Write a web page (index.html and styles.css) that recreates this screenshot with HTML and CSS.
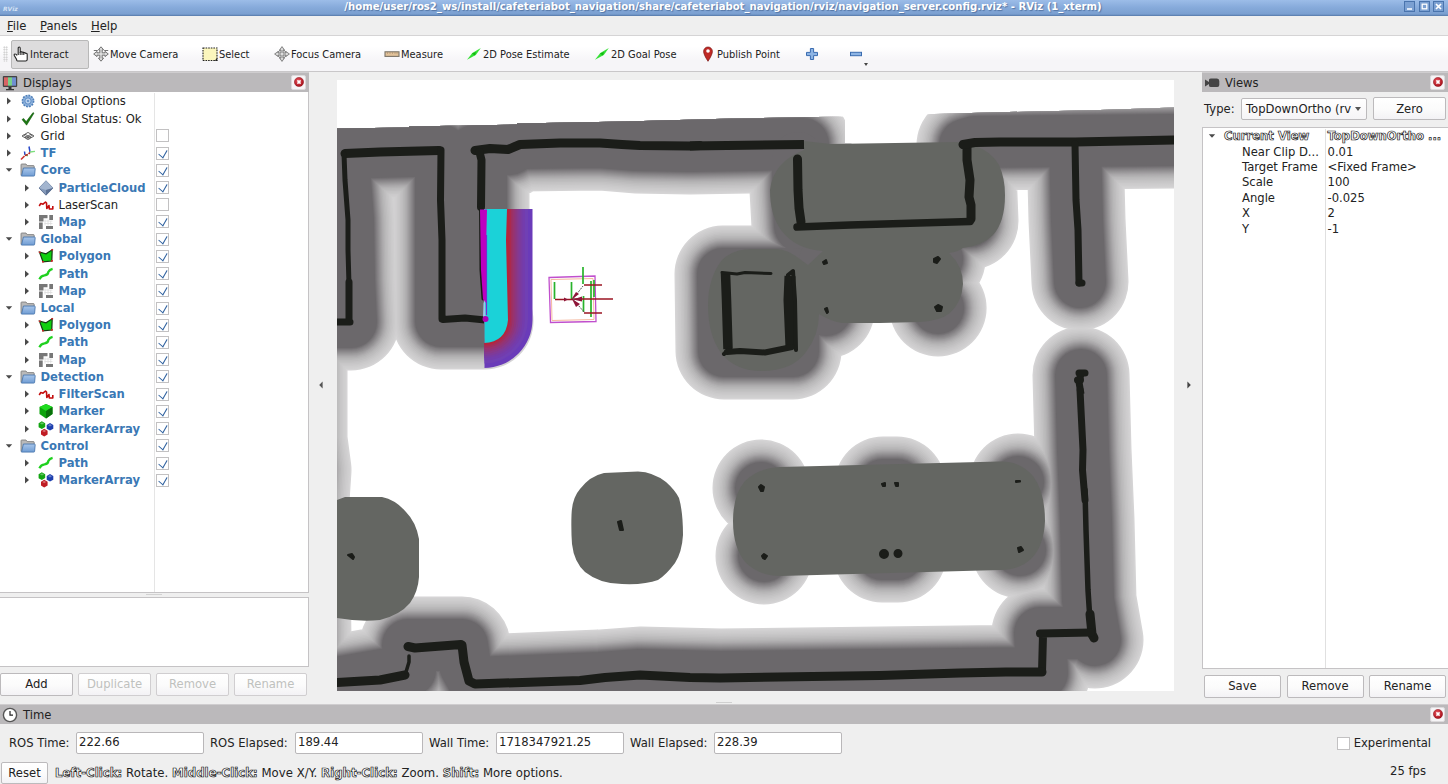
FILE: index.html
```html
<!DOCTYPE html>
<html lang="en">
<head>
<meta charset="utf-8">
<title>RViz</title>
<link rel="stylesheet" href="styles.css">
</head>
<body>
<svg class="defs" aria-hidden="true">
  <defs>
    <linearGradient id="gBlue" x1="0" y1="0" x2="0" y2="1"><stop offset="0" stop-color="#a9c6ea"/><stop offset="1" stop-color="#6f9cd3"/></linearGradient>
    <radialGradient id="gRed" cx=".4" cy=".35" r=".7"><stop offset="0" stop-color="#e8505a"/><stop offset="1" stop-color="#a30d18"/></radialGradient>
    <symbol id="i-right" viewBox="0 0 8 10"><path d="M2 1.6 6 5 2 8.4Z" fill="#4a4a4a"/></symbol>
    <symbol id="i-down" viewBox="0 0 8 10"><path d="M.8 3.2h6.4L4 6.8Z" fill="#4a4a4a"/></symbol>
    <symbol id="i-close" viewBox="0 0 10 10"><circle cx="5" cy="5" r="4.6" fill="url(#gRed)" stroke="#8d0f18" stroke-width=".5"/><path d="M3.4 3.4l3.2 3.2M6.6 3.4 3.4 6.6" stroke="#fff" stroke-width="1.5"/></symbol>
    <symbol id="i-gear" viewBox="0 0 16 16"><circle cx="8" cy="8" r="5.6" fill="#8fb3de" stroke="#4f7fb8" stroke-width="1.6" stroke-dasharray="1.9 1"/><circle cx="8" cy="8" r="3.2" fill="#b7cfec" stroke="#5c8bc4"/><circle cx="8" cy="8" r="1.1" fill="#5c8bc4"/></symbol>
    <symbol id="i-ok" viewBox="0 0 16 16"><path d="M2 8.6 3.6 7.4 6.2 10.6 13 1.6 14 2.2 6.6 14.2Z" fill="#1c7a12" stroke="#0d4d08" stroke-width=".5"/></symbol>
    <symbol id="i-grid" viewBox="0 0 16 16"><path d="M2 8 8 4.4 14 8 8 11.6ZM5 6.2l6 3.6M11 6.2 5 9.8M3.5 7.1l6 3.6M12.500 7.1l-6 3.600" fill="none" stroke="#555" stroke-width=".9"/></symbol>
    <symbol id="i-tf" viewBox="0 0 16 16"><path d="M1 14.500 4.500 11" stroke="#c33" stroke-width="1.6"/><path d="M5 10 4.500 6.500M10 7 9 1.500" stroke="#2848c8" stroke-width="1.500"/><path d="M5 10l3 .8M10 7l5-.6" stroke="#7ddf7d" stroke-width="1.300"/><path d="M5 10.500 8 9.500 10 7.500" stroke="#b02020" stroke-width="1.600" fill="none" stroke-dasharray="3 1"/></symbol>
    <symbol id="i-folder" viewBox="0 0 16 16"><path d="M1 13.500V2.700Q1 2 1.800 2H6l1.200 1.600h6.300q.7 0 .7.700V6" fill="#b9b9b9" stroke="#777" stroke-width=".8"/><path d="M3.400 6h11q.8 0 .8.800l-.6 6.500q0 .8-.8.800H1.500z" fill="url(#gBlue)" stroke="#3f6ea8" stroke-width=".8"/></symbol>
    <symbol id="i-cloud" viewBox="0 0 16 16"><path d="M8 .8 15 8 8 15.200 1 8Z" fill="#8398b8" stroke="#4f6385" stroke-width=".8"/><path d="M8 .8 15 8 8 10 1 8Z" fill="#a3b5cf"/><path d="M8 10 15 8 8 15.200Z" fill="#5c7194"/></symbol>
    <symbol id="i-scan" viewBox="0 0 16 16"><path d="M1.200 9 2.800 6.500 5 7.200 7.500 5 8.500 6 8.800 11.500 11 8.500 11.300 12 14.800 12V9" fill="none" stroke="#c40d0d" stroke-width="1.600" stroke-linejoin="round"/></symbol>
    <symbol id="i-map" viewBox="0 0 16 16"><path d="M1 1h8.500v3.200H5.500v3.300H1zM11.300 1H15v5h-3.700zM1 8.500h3.700V15H1zM8 12h7v3H8z" fill="#777"/><path d="M6.500 7h8M6.500 9.500h8M7 5.500v6M10 5.500v6M12.700 7v4.500" stroke="#ddd" stroke-width=".8"/></symbol>
    <symbol id="i-poly" viewBox="0 0 16 16"><path d="M1.500 4.200 8 5.800 14.200 1.800 13.800 13 5 13.800Z" fill="#10d010" stroke="#143c14" stroke-width="1.200"/><path d="M.8 3.500h1.800v1.600H.8zM13.300 1h1.800v1.600h-1.800zM13 12h1.800v1.800H13zM4 13h1.800v1.600H4z" fill="#c22"/></symbol>
    <symbol id="i-path" viewBox="0 0 16 16"><path d="M1.400 13.200Q3 9.800 6.500 9.400 10.500 8.500 10.300 6 11.500 3.500 14.600 2.800" fill="none" stroke="#1fd01f" stroke-width="2.300"/></symbol>
    <symbol id="i-marker" viewBox="0 0 16 16"><path d="M8 1 14.500 4v7L8 15.400 1.500 11V4Z" fill="#0da30d"/><path d="M8 1l6.500 3L8 8 1.500 4Z" fill="#1fdc1f"/><path d="M8 8l6.500-4v7L8 15.400Z" fill="#07700a"/></symbol>
    <symbol id="i-marr" viewBox="0 0 16 16"><path d="M3.800.3 7.200 2.200v3.900L3.800 8 .6 6.200V2.200Z" fill="#12a512"/><path d="M12 1.900 15.300 4v3.700L12 9.600 8.700 7.700V4Z" fill="#1d3fae"/><path d="M6.200 7.800 9.600 9.800v3.700L6.200 15.500 3 13.500V9.800Z" fill="#c01c24"/><path d="M4 1.200l2 1.200-2 1.200-2-1.200zM12 3l2 1.200-2 1.200-2-1.200zM6.200 8.800l2 1.200-2 1.200-2-1.200z" fill="#fff" opacity=".35"/></symbol>
    <symbol id="i-move" viewBox="0 0 16 16"><path d="M8 .8 10.600 3.800H9.200v3H12V5.400L15.300 8 12 10.600V9.200H9.200v3h1.400L8 15.200 5.400 12.200h1.400v-3H4v1.400L.7 8 4 5.400v1.400h2.800v-3H5.400ZM.8 4.500h4M11.200 4.500h4" fill="#ddd" stroke="#666" stroke-width=".9"/></symbol>
    <symbol id="i-focus" viewBox="0 0 16 16"><g fill="#ddd" stroke="#777" stroke-width=".9"><circle cx="8" cy="8" r="4.300"/><path d="M8 .6 10.400 4H9v3h3V5.600L15.400 8 12 10.400V9H9v3h1.400L8 15.400 5.600 12H7V9H4v1.400L.6 8 4 5.600V7h3V4H5.600Z"/></g></symbol>
    <symbol id="i-pose" viewBox="0 0 16 16"><path d="M1 13.800 6.300 6.900 14.800 2 9.800 9.100Z" fill="#35e035"/><path d="M6 7.500 10 6 8.800 9.500Z" fill="#12b812"/></symbol>
  </defs>
</svg>

<header class="titlebar">
  <span class="tb-logo">RViz</span>
  <span class="tb-text">/home/user/ros2_ws/install/cafeteriabot_navigation/share/cafeteriabot_navigation/rviz/navigation_server.config.rviz* - RViz (1_xterm)</span>
  <span class="tb-btns">
    <svg viewBox="0 0 11 11"><rect x=".5" y=".5" width="10" height="10" fill="#7ba0d2" stroke="#4a74ad"/><path d="M3 8h5" stroke="#fff" stroke-width="1.500"/></svg>
    <svg viewBox="0 0 11 11"><rect x=".5" y=".5" width="10" height="10" fill="#7ba0d2" stroke="#4a74ad"/><rect x="3.200" y="3.200" width="4.600" height="4.600" fill="none" stroke="#fff" stroke-width="1.300"/></svg>
    <svg viewBox="0 0 11 11"><rect x=".5" y=".5" width="10" height="10" fill="#7ba0d2" stroke="#4a74ad"/><path d="M3 3l5 5M8 3 3 8" stroke="#fff" stroke-width="1.700"/></svg>
  </span>
</header>

<nav class="menubar"><span class="m-file"><u>F</u>ile</span><span class="m-panels"><u>P</u>anels</span><span><u>H</u>elp</span></nav>

<div class="toolbar">
  <div class="grip"></div>
  <div class="tool active"><svg viewBox="0 0 16 16"><path d="M5.200 9V2.200q0-1.200 1-1.200t1 1.200V6q1.300-.8 1.800.3 1.300-.6 1.800.4 1.300-.4 1.700.6 1.700-.3 1.700 1.100v5q0 1.600-1.600 1.600H4.500Q3.600 15 3.600 13.500L1.300 9.500Q.8 7.800 2.300 8q1 0 1.700 1.500" fill="#fff" stroke="#222" stroke-width="1.100"/><path d="M7.200 6v3M9 6.500V9M10.800 7v2" stroke="#222" fill="none"/></svg>Interact</div>
  <div class="tool"><svg><use href="#i-move"/></svg>Move Camera</div>
  <div class="tool"><svg viewBox="0 0 16 16"><rect x="1" y="2" width="14" height="12.500" fill="#fbf6bd" stroke="#222" stroke-width="1.100" stroke-dasharray="1.600 1"/><path d="M12.500 14.800h2.800V12Z" fill="#222"/></svg>Select</div>
  <div class="tool"><svg><use href="#i-focus"/></svg>Focus Camera</div>
  <div class="tool"><svg viewBox="0 0 16 16"><rect x="1" y="5.800" width="14" height="4.600" fill="#e2c29a" stroke="#7b7468" stroke-width="1.100"/><path d="M3.500 6v2M6 6v2M8.500 6v2M11 6v2M13 6v2" stroke="#a98d6a" stroke-width=".6"/></svg>Measure</div>
  <div class="tool"><svg><use href="#i-pose"/></svg>2D Pose Estimate</div>
  <div class="tool"><svg><use href="#i-pose"/></svg>2D Goal Pose</div>
  <div class="tool"><svg viewBox="0 0 16 16"><path d="M8 15.300Q3.600 8.500 3.600 5.400A4.400 4.400 0 0 1 12.400 5.400Q12.400 8.500 8 15.300Z" fill="#bf2a26" stroke="#7c1512" stroke-width=".7"/><circle cx="8" cy="5" r="1.800" fill="#fff"/></svg>Publish Point</div>
  <div class="tool"><svg viewBox="0 0 16 16"><path d="M6.400 2.500h3.200v3.900h3.900v3.200H9.600v3.900H6.400V9.600H2.500V6.400h3.900Z" fill="#8db4e4" stroke="#3a6cb0"/></svg></div>
  <div class="tool"><svg viewBox="0 0 16 16"><rect x="2.500" y="6.300" width="11" height="3.400" fill="#8db4e4" stroke="#3a6cb0"/></svg><i class="drop"></i></div>
</div>

<main class="middle">
  <section class="dock displays">
    <div class="dock-head"><svg class="hicon" viewBox="0 0 16 16"><rect x=".8" y="1" width="14.400" height="11" rx="1" fill="#444"/><path d="M2 2.300h4v8.400H2z" fill="#d86464"/><path d="M6 2.300h4v8.400H6z" fill="#7ad08a"/><path d="M10 2.300h4v8.400h-4z" fill="#6f8fd0"/><path d="M6.500 12h3v2h2.500v1.300H4V14h2.500z" fill="#333"/></svg>Displays<span class="closebtn"><svg><use href="#i-close"/></svg></span></div>
    <div class="tree">
      <div class="row"><div class="name"><svg class="ar"><use href="#i-right"/></svg><svg class="ic"><use href="#i-gear"/></svg>Global Options</div></div>
      <div class="row"><div class="name"><svg class="ar"><use href="#i-right"/></svg><svg class="ic"><use href="#i-ok"/></svg>Global Status: Ok</div></div>
      <div class="row"><div class="name"><svg class="ar"><use href="#i-right"/></svg><svg class="ic"><use href="#i-grid"/></svg>Grid</div><i class="cb"></i></div>
      <div class="row on"><div class="name"><svg class="ar"><use href="#i-right"/></svg><svg class="ic"><use href="#i-tf"/></svg>TF</div><i class="cb"></i></div>
      <div class="row on"><div class="name"><svg class="ar"><use href="#i-down"/></svg><svg class="ic"><use href="#i-folder"/></svg>Core</div><i class="cb"></i></div>
      <div class="row on sub"><div class="name"><svg class="ar"><use href="#i-right"/></svg><svg class="ic"><use href="#i-cloud"/></svg>ParticleCloud</div><i class="cb"></i></div>
      <div class="row sub"><div class="name"><svg class="ar"><use href="#i-right"/></svg><svg class="ic"><use href="#i-scan"/></svg>LaserScan</div><i class="cb"></i></div>
      <div class="row on sub"><div class="name"><svg class="ar"><use href="#i-right"/></svg><svg class="ic"><use href="#i-map"/></svg>Map</div><i class="cb"></i></div>
      <div class="row on"><div class="name"><svg class="ar"><use href="#i-down"/></svg><svg class="ic"><use href="#i-folder"/></svg>Global</div><i class="cb"></i></div>
      <div class="row on sub"><div class="name"><svg class="ar"><use href="#i-right"/></svg><svg class="ic"><use href="#i-poly"/></svg>Polygon</div><i class="cb"></i></div>
      <div class="row on sub"><div class="name"><svg class="ar"><use href="#i-right"/></svg><svg class="ic"><use href="#i-path"/></svg>Path</div><i class="cb"></i></div>
      <div class="row on sub"><div class="name"><svg class="ar"><use href="#i-right"/></svg><svg class="ic"><use href="#i-map"/></svg>Map</div><i class="cb"></i></div>
      <div class="row on"><div class="name"><svg class="ar"><use href="#i-down"/></svg><svg class="ic"><use href="#i-folder"/></svg>Local</div><i class="cb"></i></div>
      <div class="row on sub"><div class="name"><svg class="ar"><use href="#i-right"/></svg><svg class="ic"><use href="#i-poly"/></svg>Polygon</div><i class="cb"></i></div>
      <div class="row on sub"><div class="name"><svg class="ar"><use href="#i-right"/></svg><svg class="ic"><use href="#i-path"/></svg>Path</div><i class="cb"></i></div>
      <div class="row on sub"><div class="name"><svg class="ar"><use href="#i-right"/></svg><svg class="ic"><use href="#i-map"/></svg>Map</div><i class="cb"></i></div>
      <div class="row on"><div class="name"><svg class="ar"><use href="#i-down"/></svg><svg class="ic"><use href="#i-folder"/></svg>Detection</div><i class="cb"></i></div>
      <div class="row on sub"><div class="name"><svg class="ar"><use href="#i-right"/></svg><svg class="ic"><use href="#i-scan"/></svg>FilterScan</div><i class="cb"></i></div>
      <div class="row on sub"><div class="name"><svg class="ar"><use href="#i-right"/></svg><svg class="ic"><use href="#i-marker"/></svg>Marker</div><i class="cb"></i></div>
      <div class="row on sub"><div class="name"><svg class="ar"><use href="#i-right"/></svg><svg class="ic"><use href="#i-marr"/></svg>MarkerArray</div><i class="cb"></i></div>
      <div class="row on"><div class="name"><svg class="ar"><use href="#i-down"/></svg><svg class="ic"><use href="#i-folder"/></svg>Control</div><i class="cb"></i></div>
      <div class="row on sub"><div class="name"><svg class="ar"><use href="#i-right"/></svg><svg class="ic"><use href="#i-path"/></svg>Path</div><i class="cb"></i></div>
      <div class="row on sub"><div class="name"><svg class="ar"><use href="#i-right"/></svg><svg class="ic"><use href="#i-marr"/></svg>MarkerArray</div><i class="cb"></i></div>
      <div class="rest"></div>
    </div>
    <div class="hsplit"></div>
    <div class="desc"></div>
    <div class="btnrow"><button>Add</button><button disabled>Duplicate</button><button disabled>Remove</button><button disabled>Rename</button></div>
  </section>

  <div class="vsplit"><svg viewBox="0 0 8 10"><path d="M5.600 1.500v7L2.200 5Z" fill="#555"/></svg></div>

  <svg class="view" viewBox="337 80 837 611">
    <defs>
      <clipPath id="mapClip"><path d="M337 128.500 409 127.500V126.500L517 124.500V123.500L625 121.500 733 118.500 845 116.500V143H915V114.500L990 112.500 1100 110 1174 107.500V691H337Z"/></clipPath>
      <clipPath id="localClip"><path d="M484 209H533V368H484.500Z"/></clipPath>
      <g id="walls" fill="none" stroke-linecap="round" stroke-linejoin="round">
        <path d="M330 322H351L349 280 348 220 343 153 441 150V321H485L481 300V151H474L510 149 520 143 600 142 636 145 690 146 803 144"/>
        <path d="M965 145 975 142 1174 140M1075 142 1077 220 1080 282M798 158V190L800 226 970 221 967 146"/>
        <path d="M723 274H793V351H724Z"/>
        <path d="M825 261h.1M937 259h.1M826 310h.1M938 308h.1"/>
        <path d="M761 488h.1M883 485H897M1018 482h.1M764 556h.1M882 554H898M1020 550h.1"/>
        <path d="M1081 375 1083 450 1086 520 1088 600 1095 640M1090 633H1040L1042 673 960 674 720 677 640 675 600 678 475 683 465 665 462 645H408L410 670 337 683"/>
        <path d="M299 322 299 440 303 470 301 500 303 640"/>
      </g>
      <g id="localWall" fill="none" stroke-linecap="round" stroke-linejoin="round"><path d="M484 190V319.500"/></g>
    </defs>
    <rect x="337" y="80" width="837" height="611" fill="#fff"/>
    <g clip-path="url(#mapClip)">
      <use href="#walls" stroke="#d5d4d5" stroke-width="97"/>
      <use href="#walls" stroke="#d1d0d1" stroke-width="94"/>
      <use href="#walls" stroke="#cecdce" stroke-width="91"/>
      <use href="#walls" stroke="#cbcacb" stroke-width="88"/>
      <use href="#walls" stroke="#c7c6c7" stroke-width="85"/>
      <use href="#walls" stroke="#c3c2c3" stroke-width="82"/>
      <use href="#walls" stroke="#bebdbe" stroke-width="79"/>
      <use href="#walls" stroke="#b9b8b9" stroke-width="76"/>
      <use href="#walls" stroke="#b3b2b3" stroke-width="73"/>
      <use href="#walls" stroke="#adabad" stroke-width="70.500"/>
      <use href="#walls" stroke="#a6a4a6" stroke-width="68"/>
      <use href="#walls" stroke="#9f9d9f" stroke-width="66"/>
      <use href="#walls" stroke="#989698" stroke-width="64"/>
      <use href="#walls" stroke="#918f91" stroke-width="62"/>
      <use href="#walls" stroke="#8a878a" stroke-width="60"/>
      <use href="#walls" stroke="#838083" stroke-width="58"/>
      <use href="#walls" stroke="#7b787b" stroke-width="56"/>
      <use href="#walls" stroke="#737073" stroke-width="54"/>
      <use href="#walls" stroke="#6b686b" stroke-width="52"/>
    </g>
    <g fill="#646662">
      <path d="M804 141 830 144 960 142 975 146Q991 151 999 165 1005 178 1005 195 1005 222 993 235 982 246 963 248 958 252 949 253 963 266 963 284 962 302 950 313 940 321 920 322L880 323H842Q830 321 819 314 819 335 806 352 792 371 762 371 735 371 721 353 708 335 708 305 708 278 722 260 733 249 752 249H777Q788 250 797 257L808 265 823 251Q795 249 781 230 770 215 770 190 773 162 804 150Z"/>
      <path d="M780 467 1000 461.500Q1020 461 1033 476 1045 492 1045 521 1044 545 1032 558 1020 570 1000 570L780 576Q760 576 746 563 733 548 733 521 733 495 745 481 758 468 780 467Z"/>
      <path d="M604 473 638 471.500Q653 472 666 482 675 490 679 498 683 512 683 535 682 552 675 563 666 575 658 580 645 585 622 584 600 584 585 572 574 562 572 544 571 530 571.500 515 572 498 580 489 590 476 604 473Z"/>
      <path d="M337 500 345 497H382Q396 500 406 512 416 522 419 539V577Q418 592 410 603 400 615 380 620 360 622 337 618Z"/>
    </g>
    <g fill="none" stroke="#1b1d19" stroke-linecap="round" stroke-linejoin="round">
      <path stroke-width="9" d="M345 153.500 380 152 439 150.500M475 150.500 490 148.500 508 149.500 514 147 520 144.500 560 143 600 143 622 144.500 640 145.500 690 146 700 145.500"/>
      <path stroke-width="9" stroke-linecap="butt" d="M690 146 804 144.500"/>
      <path stroke-width="5" d="M344 154 345 180 348 220 348 250 349 285"/>
      <path stroke-width="7" d="M349 282V320M337 322H350M441 150 440.500 200 442 240 442 319M443 319.500 465 318 485 320"/>
      <path stroke-width="8" d="M479.500 152 481.500 160 481 207"/><path stroke-width="3" d="M480.500 205 481 270 483 299"/>
      <path stroke-width="9" d="M797.500 159 798 190 799 208 801 222M967 146 967 160 970 180 969 197 971 205 971 219"/>
      <path stroke-width="7.500" d="M797 227 850 225 970 221.500"/>
      <path stroke-width="9" d="M963 144.500 975 142.500 1000 142 1075 142 1174 140"/>
      <path stroke-width="7" d="M1075 144 1076 200 1078 230 1079 283"/><path stroke-width="7" d="M1079 283h3"/>
      <path stroke-width="9.500" stroke-linecap="butt" d="M725.500 273 726.500 300 728 349"/>
      <path stroke-width="3" d="M722 272.500 737 274 745 272.500 771 273.500"/>
      <path stroke-width="11" stroke-linecap="butt" d="M790 276 789 300 791 348"/><path stroke-width="4" d="M788 275 793 271 795 300 796 350M724 354 730 348"/>
      <path stroke-width="6" d="M727 352 740 351 765 352.500 792 347"/>
      <path stroke-width="7" stroke-linecap="butt" d="M1081 374 1079 382 1081 394"/><path stroke-width="7" d="M1079 373h6M1077.500 380h3"/>
      <path stroke-width="7" d="M1080 390 1083 450 1082.500 470 1085 500"/>
      <path stroke-width="5.500" d="M1085 490 1086 530 1088 590 1091 636"/>
      <path stroke-width="9" d="M1090 614 1092 634 1094 638"/>
      <path stroke-width="8" d="M1040 633.500 1091 632.500M1043 635 1042 672"/>
      <path stroke-width="9" d="M1042 672 1006 672 960 673 880 675.500 720 678 690 677.500 640 675 605 677.500 580 680.500 475 684 469 681 464 662 462 645M408 646.500 415 648 461 644.500M405 675 380 680 337 682.500"/>
      <path stroke-width="3.500" d="M409 656 409 662 406 672"/>
    </g>
    <g fill="#1b1d19" stroke="#1b1d19" stroke-width="2" stroke-linejoin="round">
      <path d="M823 262l3-2 1 3-3 1zM934 259l4-2 2 2-3 4-3-1zM825 309l2-1 1 4-1 1zM935 307l3-2 4 2-1 4-4 0z"/>
      <path d="M759 487l2-2 3 2-1 4-2 0zM882 484l3-1v3l-2 0zM895 483l3 0v3l-2 0zM1016 481h4v.5l-4 .5zM762 556l2-2 3 2-2 3-2-1zM1018 548l3-1 2 3-4 2zM618 522l3-1 2 9-3 0zM348 555l4-1 2 3-1 2z"/>
      <circle cx="884" cy="554" r="4"/><circle cx="898" cy="553.500" r="3.500"/>
    </g>
    <g clip-path="url(#localClip)">
      <use href="#localWall" stroke="#6a3bb9" stroke-width="97"/>
      <use href="#localWall" stroke="#7040b4" stroke-width="88"/>
      <use href="#localWall" stroke="#733cad" stroke-width="82"/>
      <use href="#localWall" stroke="#783ba3" stroke-width="77"/>
      <use href="#localWall" stroke="#7f3a98" stroke-width="73"/>
      <use href="#localWall" stroke="#87388b" stroke-width="69"/>
      <use href="#localWall" stroke="#8e357d" stroke-width="65"/>
      <use href="#localWall" stroke="#97336e" stroke-width="61"/>
      <use href="#localWall" stroke="#a02e5e" stroke-width="57"/>
      <use href="#localWall" stroke="#aa2a4d" stroke-width="54"/>
      <use href="#localWall" stroke="#b5253b" stroke-width="51"/>
      <path d="M484 209H507L506 240 508 320Q506 342 484 343Z" fill="#1bd2d8"/>
    </g>
    <path d="M480 209.500H487L486 250 487 300 485 303 483 299 481 270Z" fill="#bd00c0"/>
    <path d="M483.500 303 485 300 485.500 316 483 317Z" fill="#9cc8e8" /><path d="M486.500 235V315" stroke="#7a2ad0" stroke-width="1.200"/>
    <circle cx="485.500" cy="319" r="3" fill="#b000b4"/>
    <g fill="none">
      <path d="M549 277.500 595 276 596 321.500 550.500 322.500Z" stroke="#c04fcd" stroke-width="1.300"/>
      <path d="M551 279.500 593 278.500 594 319.500 552 320.500Z" stroke="#f5b9a0"/>
      <path d="M554.500 282V299M571.500 282V299M583 267V284M583.500 296V312M591 281V317M594 280V297" stroke="#28b32c" stroke-width="1.700"/>
      <path d="M555 299.500H573M574 299H613M584 285H602M584 313H602" stroke="#9c1623" stroke-width="1.600"/>
      <path d="M573 299 583 286M573 299 584 312" stroke="#555" stroke-dasharray="2 1"/>
      <path d="M571 300 576 292 579 294ZM572 299 580 304 576 307ZM573 299.500l9-3v5zM564 297.500l4 2-4 2z" fill="#8e1538"/>
    </g>
  </svg>

  <div class="vsplit right"><svg viewBox="0 0 8 10"><path d="M2.400 1.500v7L5.800 5Z" fill="#444"/></svg></div>

  <section class="dock views">
    <div class="dock-head"><svg class="hicon" viewBox="0 0 16 16"><path d="M1 4.500 5 7V4.500Q5.500 3.500 7 3.500h6Q15.300 3.500 15.300 6v4q0 2-2 2H7Q5 12 5 10.500V9L1 11.500Z" fill="#444"/></svg>Views<span class="closebtn"><svg><use href="#i-close"/></svg></span></div>
    <div class="typerow"><label>Type:</label><div class="combo"><span>TopDownOrtho (rv</span><i></i></div><button>Zero</button></div>
    <div class="props">
      <div class="prow head"><span><svg class="ar"><use href="#i-down"/></svg>Current View</span><span>TopDownOrtho ...</span></div>
      <div class="prow"><span>Near Clip D...</span><span>0.01</span></div>
      <div class="prow"><span>Target Frame</span><span>&lt;Fixed Frame&gt;</span></div>
      <div class="prow"><span>Scale</span><span>100</span></div>
      <div class="prow"><span>Angle</span><span>-0.025</span></div>
      <div class="prow"><span>X</span><span>2</span></div>
      <div class="prow"><span>Y</span><span>-1</span></div>
      <div class="prest"></div>
    </div>
    <div class="btnrow"><button>Save</button><button>Remove</button><button>Rename</button></div>
  </section>
</main>

<div class="timegap"></div>
<section class="time">
  <div class="dock-head"><svg class="hicon" viewBox="0 0 16 16"><circle cx="8" cy="8" r="6.600" fill="#fff" stroke="#555" stroke-width="1.400"/><path d="M8 4v4.200h3" fill="none" stroke="#222" stroke-width="1.200"/></svg>Time<span class="closebtn"><svg><use href="#i-close"/></svg></span></div>
  <div class="fields">
    <label class="l1">ROS Time:</label><div class="field">222.66</div>
    <label class="l2">ROS Elapsed:</label><div class="field">189.44</div>
    <label class="l3">Wall Time:</label><div class="field">1718347921.25</div>
    <label class="l4">Wall Elapsed:</label><div class="field">228.39</div>
    <span class="exp"><i class="cb"></i>Experimental</span>
  </div>
</section>
<footer class="status">
  <button>Reset</button>
  <span class="hint"><b>Left-Click:</b> Rotate. <b>Middle-Click:</b> Move X/Y. <b>Right-Click:</b> Zoom. <b>Shift:</b> More options.</span>
  <span class="fps">25 fps</span>
</footer>
</body>
</html>
```
FILE: styles.css
```css
* { box-sizing: border-box; }
body {
  margin: 0; width: 1448px; height: 784px; overflow: hidden;
  display: flex; flex-direction: column;
  background: #efefef; color: #222;
  font: 11.6px "DejaVu Sans", sans-serif;
}
.defs { position: absolute; width: 0; height: 0; }
button {
  font: inherit; color: #222; padding: 0; height: 23px;
  border: 1px solid #bcbabc; border-radius: 2px;
  background: linear-gradient(#fff, #fbfbfb 55%, #f3f2f5);
}
button:disabled { color: #bfc1be; border-color: #d0ced0; }

.titlebar {
  height: 16px; flex: none; display: grid; grid-template-columns: 60px 1fr 60px; align-items: center;
  background: linear-gradient(#9cbde8, #87abdb 45%, #7a9fd0 88%, #5478a8);
  color: #fff; font-size: 10.1px; font-weight: bold; white-space: nowrap;
}
.tb-logo { font-size: 6px; font-style: italic; padding-left: 3px; color: #d5e2f4; }
.tb-text { text-align: center; line-height: 13px; padding: 0 2px 3px 0; text-shadow: 1px 1px 1px #5475a4; }
.tb-btns { display: flex; gap: 3.5px; justify-content: flex-end; padding: 0 4px 3px 0; }
.tb-btns svg { width: 11px; height: 11px; display: block; }

.menubar { height: 20px; flex: none; display: flex; align-items: center; padding-left: 7px; border-bottom: 1px solid #d5d4d5; }
.m-file { width: 33px; }
.m-panels { width: 51px; }

.toolbar {
  height: 36px; flex: none; display: grid; align-items: center;
  grid-template-columns: 11px 80px 109px 72px 110px 82px 128px 106px 104px 44px 40px;
  font-size: 9.9px; white-space: nowrap; padding-top: 1px;
  background: linear-gradient(#fff 0 30%, #f6f5f8 70%);
  border-bottom: 1px solid #c9c7c9;
}
.grip { width: 5px; height: 16px; margin-left: 3px; background: radial-gradient(circle, #c4c4c4 .7px, transparent 1px) 0 0 / 2.5px 2.5px; }
.tool { display: flex; align-items: center; height: 29px; padding-left: 1.5px; gap: 1.500px; position: relative; }
.tool svg { width: 16px; height: 16px; flex: none; }
.tool.active { width: 78px; padding-left: .5px; background: #dddcdd; border: 1px solid #b8b8b8; border-radius: 2px; }
.drop { position: absolute; left: 18px; top: 23px; border: 2.5px solid transparent; border-top: 3px solid #444; border-bottom: 0; }

.middle { height: 630px; flex: none; display: flex; }
.dock { display: flex; flex-direction: column; }
.dock-head {
  height: 20px; flex: none; display: flex; align-items: center; background: #bbb9bb;
  border-top: 1px solid #cfcdcf; padding-right: 1px;
}
.hicon { width: 16px; height: 16px; margin: 0 5px 0 2px; }
.closebtn { margin: -1px 2px 0 auto; width: 15px; height: 15px; background: #f6f4f6; border: 1px solid #dcdadc; border-radius: 2px; display: grid; place-items: center; }
.closebtn svg { width: 10px; height: 10px; display: block; }

.displays { width: 309px; }
.tree { height: 501px; padding-top: .8px; background: #fff; border: 1px solid #c5c3c5; border-left: 0; border-top: 0; display: flex; flex-direction: column; }
.row { height: 17.22px; flex: none; display: flex; align-items: center; }
.name { width: 155px; height: 100%; border-right: 1px solid #e5e5e5; display: flex; align-items: center; padding-left: 5px; white-space: nowrap; }
.ar { width: 8px; height: 10px; flex: none; margin-right: 6.500px; }
.ic { width: 16px; height: 16px; flex: none; margin-right: 5px; }
.sub .name { padding-left: 23px; }
.on .name { color: #3a78b5; font-weight: bold; }
.rest { flex: 1; width: 155px; border-right: 1px solid #e5e5e5; }
.cb { width: 13px; height: 13px; margin-left: 1px; background: #fff; border: 1px solid #c2c1c2; display: block; flex: none; }
.on .cb::after { content: ""; display: block; width: 4.500px; height: 8px; margin: 0 0 0 3px; border: solid #2c5f9e; border-width: 0 1.800px 1.800px 0; transform: rotate(30deg) skewY(10deg); }
.hsplit { height: 4px; background: linear-gradient(90deg, transparent 146px, #d2d2d2 146px 162px, transparent 162px) 0 1px / 100% 1px no-repeat; }
.desc { height: 70px; background: #fff; border: 1px solid #c5c3c5; border-left: 0; }
.btnrow { display: grid; padding-top: 5.500px; }
.displays .btnrow { grid-template-columns: repeat(4, 73px); gap: 5px; padding-left: 0; }

.vsplit { width: 28px; display: grid; place-items: center; }
.vsplit svg { width: 8px; height: 10px; margin: -4px 0 0 -4px; }
.vsplit.right svg { margin-left: 2px; }
.view { width: 837px; height: 611px; margin-top: 8px; flex: none; display: block; }

.views { width: 246px; }
.typerow { height: 35px; display: flex; align-items: center; padding: 0 0 2px 2px; }
.typerow label { width: 37px; }
.combo { width: 126px; height: 22px; border: 1px solid #bcbabc; border-radius: 2px; background: linear-gradient(#fff, #f5f4f6); display: flex; align-items: center; padding-left: 4px; margin-right: 6px; }
.combo span { width: 104px; white-space: nowrap; }
.combo i { border: 3px solid transparent; border-top: 4px solid #555; border-bottom: 0; margin-left: 5px; }
.typerow button { width: 73px; }
.props { height: 542px; padding-top: .5px; background: #fff; border: 1px solid #c5c3c5; border-right: 0; display: flex; flex-direction: column; font-size: 11.600px; }
.prow { height: 15.4px; flex: none; display: grid; grid-template-columns: 123px 1fr; white-space: nowrap; }
.prow > span { display: flex; align-items: center; padding-left: 1.500px; }
.prow > span:first-child { padding-left: 39px; border-right: 1px solid #e0e0e0; }
.prow.head > span:first-child { padding-left: 5px; }
.head .ar { margin-right: 8px; }
.head, .hint b { font-weight: bold; color: #fff; -webkit-text-stroke: .7px #151515; }
.prest { flex: 1; width: 123px; border-right: 1px solid #e0e0e0; }
.views .btnrow { grid-template-columns: repeat(3, 77px); gap: 5.500px; padding-left: 2px; }

.timegap { height: 2px; flex: none; background: linear-gradient(90deg, transparent 716px, #d0d0d0 716px 732px, transparent 732px) 0 0 / 100% 1px no-repeat; }
.time { flex: none; }
.fields { height: 38px; display: flex; align-items: center; padding-left: 9px; }
.fields label { white-space: nowrap; }
.l1 { width: 67px; } .l2 { width: 85px; } .l3 { width: 67px; } .l4 { width: 84px; }
.field { width: 128px; height: 22px; margin-right: 6px; background: #fff; border: 1px solid #b9b7b9; border-radius: 2px; padding-left: 2px; line-height: 19px; }
.exp { margin: 0 17px 0 auto; display: flex; align-items: center; gap: 4px; white-space: nowrap; }
.status { height: 22px; flex: none; display: flex; align-items: center; padding-left: 1px; }
.status button { width: 47px; height: 22px; }
.hint { margin-left: 7px; white-space: nowrap; font-size: 11.700px; letter-spacing: .04px; }
.hint b { font-size: 11.700px; }
.fps { margin: -4px 22px 0 auto; }
```
